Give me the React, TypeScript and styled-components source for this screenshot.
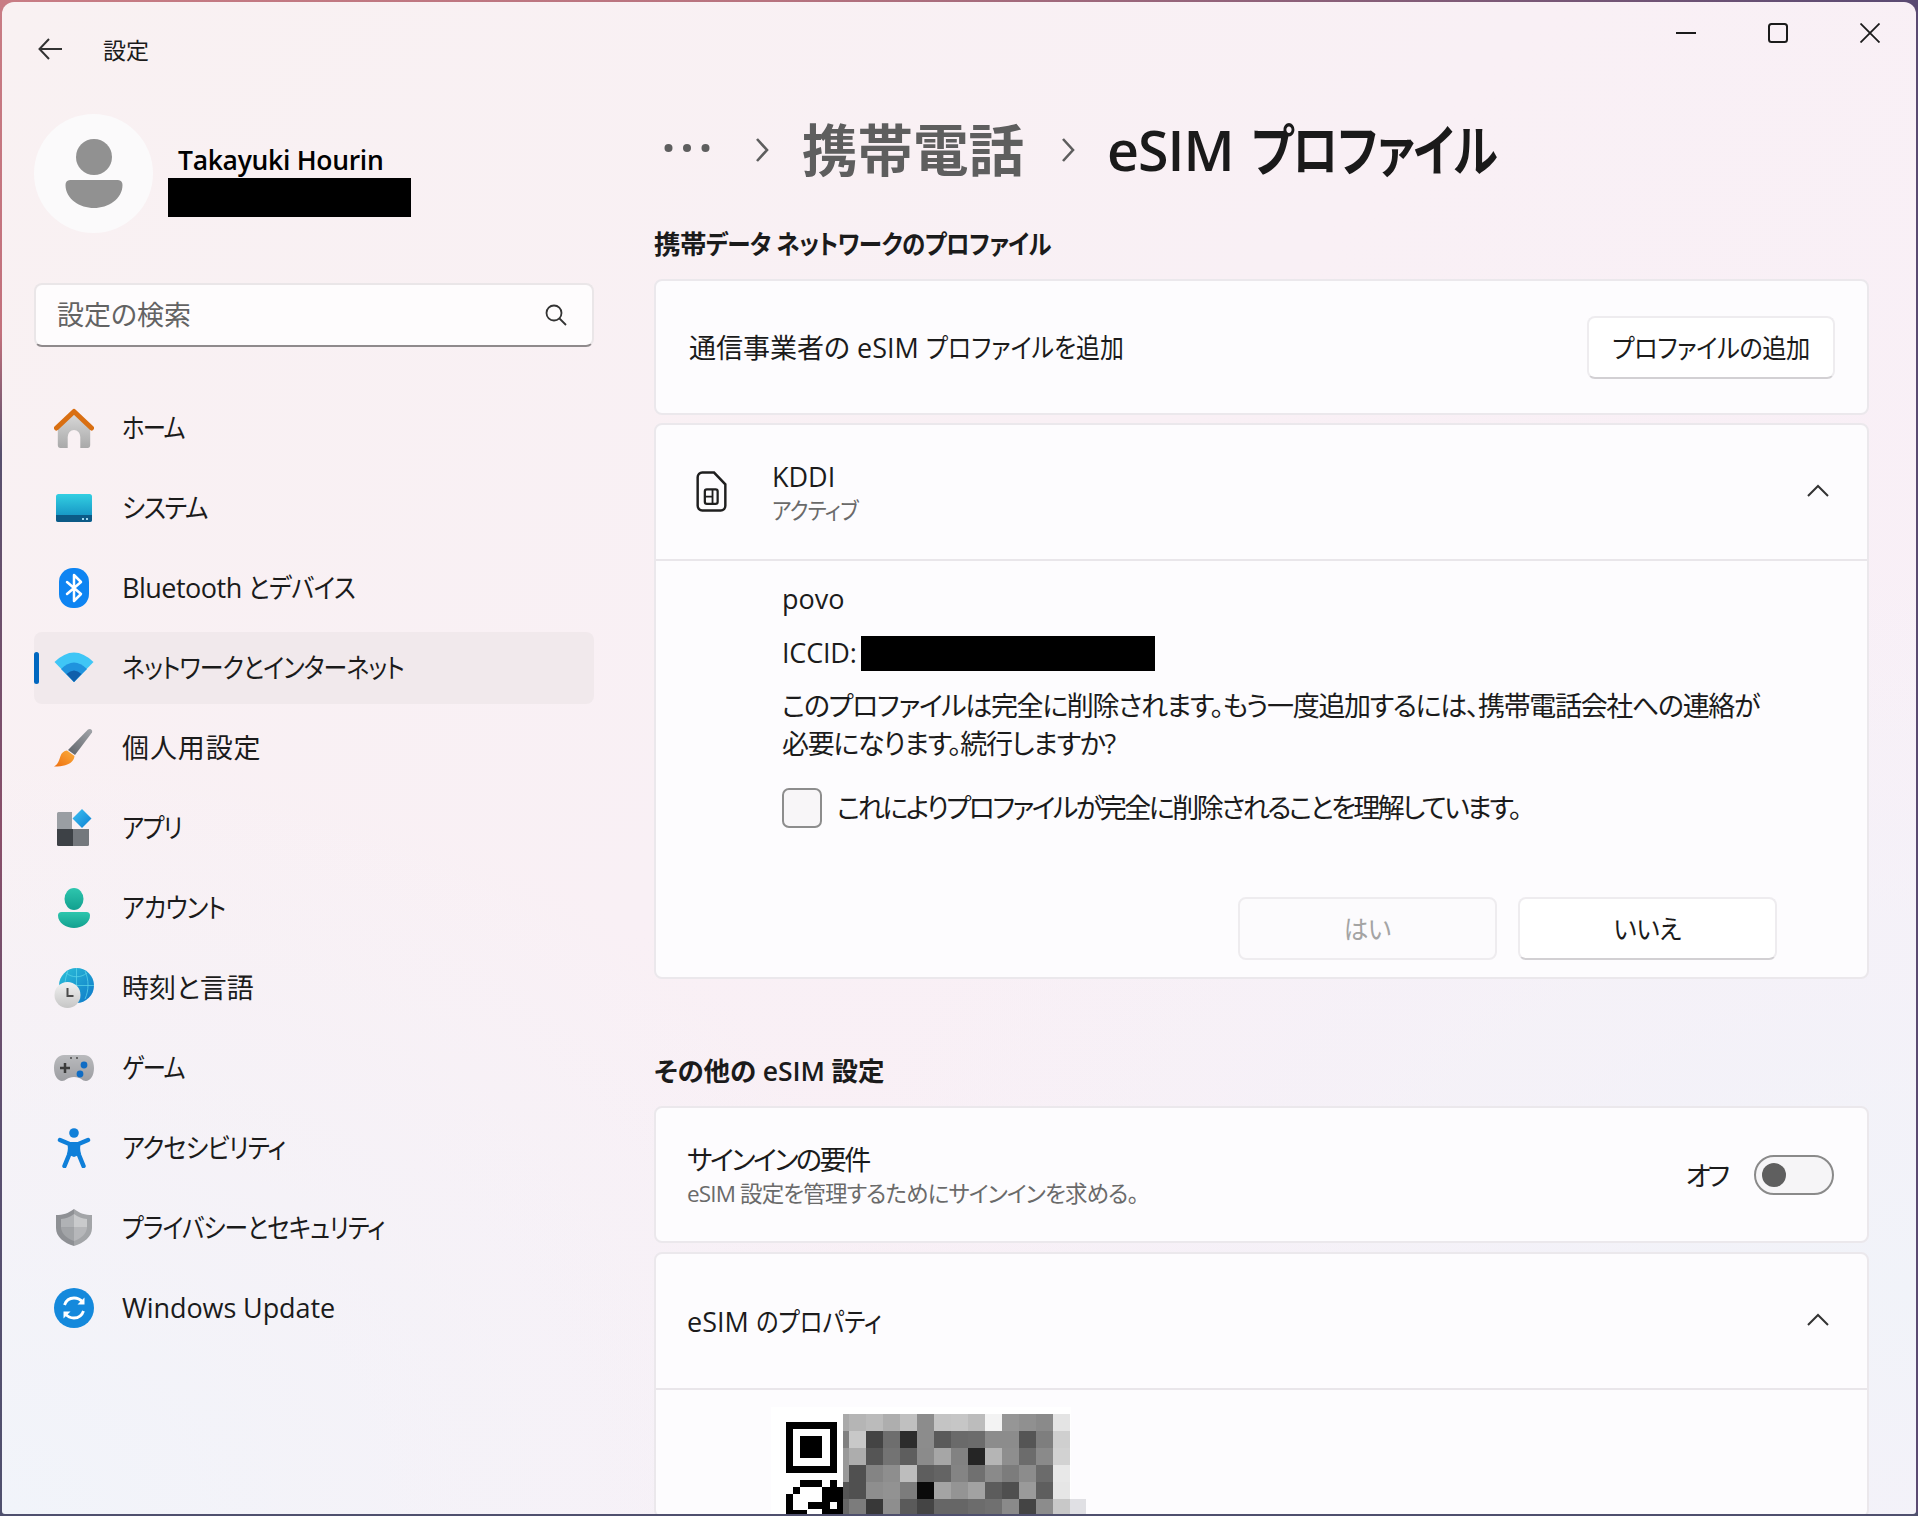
import { FC, ReactNode } from "react";
import styled, { createGlobalStyle } from "styled-components";

const GlobalStyle = createGlobalStyle`
  html, body {
    margin: 0;
    padding: 0;
    background: #5a4f6e;
  }

  body {
    font-family: "Open Sans", "Noto Sans CJK JP", sans-serif;
    font-feature-settings: "palt";
    color: #1b1b1b;
  }
`;

const Desktop = styled.div`
  width: 1918px;
  height: 1516px;
  box-sizing: border-box;
  padding: 2px;
  overflow: hidden;
  background:
    linear-gradient(#4f506e, #4f506e) bottom / 100% 4px no-repeat,
    linear-gradient(180deg, #c87c84 0%, #c2707c 22%, #57506e 30%, #8a4f6a 55%, #5a4f70 75%, #4f506e 100%) left / 4px 100% no-repeat,
    linear-gradient(90deg, #c87c84 0%, #b8737f 40%, #5a4a72 100%);
`;

const Window = styled.div`
  height: 100%;
  display: grid;
  grid-template-columns: 652px 1fr;
  overflow: hidden;
  border-radius: 12px 12px 3px 3px;
  background:
    radial-gradient(ellipse at 100% 85%, #f1f3f9 0, rgba(241, 243, 249, 0) 40%),
    radial-gradient(ellipse at 0% 100%, #f1f4fa 0, rgba(241, 244, 250, 0) 36%),
    linear-gradient(135deg, #f9f1f2 0%, #f9f0f5 45%, #f8eff8 100%);
`;

const Sidebar = styled.aside`
  padding-left: 32px;
`;

const TitleBar = styled.div`
  height: 94px;
  display: flex;
  align-items: center;
  gap: 41px;
  padding-left: 4px;
  margin-bottom: 18px;
`;

const AppTitle = styled.span`
  font-size: 23px;
  line-height: 30px;
  margin-top: 1px;
`;

const Profile = styled.div`
  display: flex;
  gap: 15px;
`;

const Avatar = styled.div`
  width: 119px;
  height: 119px;
  border-radius: 50%;
  background: #fbfafb;
  display: flex;
  align-items: center;
  justify-content: center;
`;

const ProfileText = styled.div`
  padding-top: 31px;
`;

const UserName = styled.div`
  font-size: 26.5px;
  line-height: 30px;
  margin-bottom: 3px;
  font-weight: 600;
  color: #000;
  padding-left: 10px;
  letter-spacing: -0.3px;
`;

const Redacted = styled.div<{ $w: number; $h: number }>`
  width: ${(p) => p.$w}px;
  height: ${(p) => p.$h}px;
  background: #000;
`;

const Search = styled.div`
  width: 560px;
  height: 64px;
  box-sizing: border-box;
  margin-top: 50px;
  margin-bottom: 45px;
  padding: 0 25px 0 21px;
  display: flex;
  align-items: center;
  justify-content: space-between;
  background: #fefcfd;
  border: 2px solid #eae6e8;
  border-bottom-color: #8f8a8c;
  border-radius: 8px;
`;

const Placeholder = styled.span`
  font-size: 27px;
  line-height: 36px;
  color: #636363;
`;

const NavList = styled.nav`
  width: 560px;
  display: flex;
  flex-direction: column;
  gap: 8px;
`;

const NavItem = styled.div<{ $active?: boolean }>`
  position: relative;
  height: 72px;
  display: flex;
  align-items: center;
  gap: 28px;
  padding-left: 20px;
  border-radius: 8px;
  background: ${(p) => (p.$active ? "#f1e9ec" : "transparent")};

  &::before {
    content: "";
    display: ${(p) => (p.$active ? "block" : "none")};
    position: absolute;
    left: 0;
    top: 20px;
    width: 5px;
    height: 32px;
    border-radius: 3px;
    background: #0067c0;
  }
`;

const Narrow = styled.span<{ $scale: number; $origin?: string }>`
  display: inline-block;
  white-space: nowrap;
  transform: scaleX(${(p) => p.$scale});
  transform-origin: ${(p) => p.$origin ?? "left"} center;
`;

const NavLabel = styled.span<{ $track: number }>`
  font-size: 27px;
  line-height: 36px;
  letter-spacing: ${(p) => p.$track}px;
  white-space: nowrap;
`;

const Main = styled.main`
  padding-right: 47px;
  min-width: 0;
`;

const Controls = styled.div`
  height: 108px;
  margin-right: -47px;
  display: flex;
  justify-content: flex-end;
  align-items: flex-start;
`;

const ControlButton = styled.div`
  width: 92px;
  height: 62px;
  display: flex;
  align-items: center;
  justify-content: center;
`;

const Breadcrumb = styled.div`
  height: 80px;
  display: flex;
  align-items: center;
  padding-left: 10px;
`;

const Crumb = styled.span<{ $current?: boolean }>`
  font-size: 55.5px;
  line-height: 76px;
  font-weight: 600;
  white-space: nowrap;
  word-spacing: 4px;
  letter-spacing: ${(p) => (p.$current ? "-1px" : "0")};
  color: ${(p) => (p.$current ? "#1a1a1a" : "#5e5e5e")};
`;

const CrumbChevron = styled.svg<{ $left: number; $right: number }>`
  margin: 0 ${(p) => p.$right}px 0 ${(p) => p.$left}px;
  flex: none;
`;

const SectionTitle = styled.h2<{ $top: number; $bottom: number; $track: number }>`
  height: 34px;
  margin: ${(p) => p.$top}px 0 ${(p) => p.$bottom}px 0;
  font-size: 26.5px;
  line-height: 34px;
  font-weight: 600;
  letter-spacing: ${(p) => p.$track}px;
  white-space: nowrap;
`;

const Card = styled.section<{ $gap?: number }>`
  margin-bottom: ${(p) => p.$gap ?? 9}px;
  box-sizing: border-box;
  overflow: hidden;
  background: #fdfcfe;
  border: 2px solid #ebe8ec;
  border-radius: 8px;
`;

const CardRow = styled.div<{ $h: number; $pl: number; $pr: number; $divided?: boolean }>`
  height: ${(p) => p.$h}px;
  box-sizing: border-box;
  display: flex;
  align-items: center;
  padding: 0 ${(p) => p.$pr}px 0 ${(p) => p.$pl}px;
  border-bottom: ${(p) => (p.$divided ? "2px solid #e9e6ea" : "none")};
`;

const RowLabel = styled.span<{ $track?: number }>`
  flex: 1;
  font-size: 27px;
  line-height: 36px;
  margin-top: 1px;
  letter-spacing: ${(p) => p.$track ?? 0}px;
  white-space: nowrap;
`;

const RowTexts = styled.div<{ $lift: number }>`
  flex: 1;
  display: flex;
  flex-direction: column;
  white-space: nowrap;
  margin-top: ${(p) => p.$lift}px;
`;

const RowTitle = styled.span<{ $track?: number }>`
  font-size: 27px;
  line-height: 36px;
  letter-spacing: ${(p) => p.$track ?? 0}px;
`;

const RowHint = styled.span<{ $track?: number }>`
  font-size: 22.5px;
  line-height: 32px;
  color: #6a6a6a;
  letter-spacing: ${(p) => p.$track ?? 0}px;
`;

const Button = styled.div<{ $w: number; $disabled?: boolean }>`
  width: ${(p) => p.$w}px;
  height: 63px;
  box-sizing: border-box;
  padding-bottom: 2px;
  display: flex;
  align-items: center;
  justify-content: center;
  font-size: 26.5px;
  letter-spacing: -0.5px;
  border-radius: 8px;
  border: 2px solid #eeecef;
  border-bottom-color: ${(p) => (p.$disabled ? "#eeecef" : "#d2d0d3")};
  background: ${(p) => (p.$disabled ? "#fcfbfd" : "#fff")};
  color: ${(p) => (p.$disabled ? "#a4a4a4" : "#1b1b1b")};
`;

const SimIcon = styled.svg`
  margin-right: 45px;
  margin-bottom: 2px;
  flex: none;
`;

const ChevronBox = styled.svg`
  margin-bottom: 4px;
  flex: none;
`;

const ProfileBody = styled.div`
  padding: 18px 90px 17px 126px;
`;

const BodyLine = styled.div`
  font-size: 27px;
  line-height: 40px;
  height: 40px;
`;

const IccidLine = styled(BodyLine)`
  margin-top: 14px;
  display: flex;
  align-items: center;
  gap: 4px;
  letter-spacing: -0.2px;
`;

const Warning = styled.p`
  height: 76px;
  margin: 14px 0 25px;
  font-size: 27px;
  line-height: 38px;
  letter-spacing: -1.35px;
  white-space: nowrap;
`;

const CheckRow = styled.div`
  display: flex;
  align-items: center;
  gap: 15px;
  font-size: 27px;
  letter-spacing: -2.52px;
  white-space: nowrap;
`;

const CheckLabel = styled.span`
  margin-top: -3px;
`;

const CheckBox = styled.div`
  width: 40px;
  height: 40px;
  box-sizing: border-box;
  border: 2px solid #8d8d8d;
  border-radius: 7px;
  background: #f8f6f8;
`;

const ButtonRow = styled.div`
  margin-top: 69px;
  display: flex;
  justify-content: flex-end;
  gap: 21px;
`;

const ToggleLabel = styled.span`
  font-size: 27px;
  letter-spacing: -3px;
  margin-right: 27px;
`;

const Toggle = styled.div`
  width: 80px;
  height: 40px;
  box-sizing: border-box;
  padding-left: 6px;
  display: flex;
  align-items: center;
  border: 2px solid #8a8a8a;
  border-radius: 20px;
  background: #f6f5f7;

  &::after {
    content: "";
    width: 24px;
    height: 24px;
    border-radius: 50%;
    background: #5f5f5f;
  }
`;

const QrBody = styled.div`
  padding: 17px 0 0 115px;
  line-height: 0;
`;

const icon = (children: ReactNode) => (
  <svg width="40" height="40" viewBox="0 0 40 40" style={{ flex: "none" }}>
    {children}
  </svg>
);

const HomeIcon = () =>
  icon(
    <>
      <defs>
        <linearGradient id="homeBody" x1="0" y1="0" x2="0" y2="1">
          <stop offset="0" stopColor="#dcdcdc" />
          <stop offset="1" stopColor="#a9a9a9" />
        </linearGradient>
      </defs>
      <path d="M2 18 20 3 38 18V37a3 3 0 0 1-3 3H27V29a7 7 0 0 0-14 0V40H5a3 3 0 0 1-3-3Z" fill="url(#homeBody)" transform="translate(2 0) scale(.9 1)" />
      <path d="M2.500 20 20 3.500 37.500 20" fill="none" stroke="#d96f12" strokeWidth="5" strokeLinejoin="round" strokeLinecap="round" />
    </>
  );

const SystemIcon = () =>
  icon(
    <>
      <defs>
        <linearGradient id="sysScreen" x1="0" y1="0" x2="0" y2="1">
          <stop offset="0" stopColor="#33cfe2" />
          <stop offset="1" stopColor="#0f87bd" />
        </linearGradient>
      </defs>
      <rect x="2" y="6" width="36" height="28" rx="2.500" fill="url(#sysScreen)" />
      <path d="M2 27H38V31.500A2.500 2.500 0 0 1 35.500 34H4.500A2.500 2.500 0 0 1 2 31.500Z" fill="#0c5a86" />
      <rect x="28" y="30" width="2" height="2" fill="#9fd8ee" />
      <rect x="32" y="30" width="2" height="2" fill="#9fd8ee" />
    </>
  );

const BluetoothIcon = () =>
  icon(
    <>
      <rect x="5" y="0" width="30" height="40" rx="14" fill="#0e84f2" />
      <path d="M13 14 27 26 20 33V7L27 14 13 26" fill="none" stroke="#fff" strokeWidth="2.500" strokeLinejoin="round" strokeLinecap="round" />
    </>
  );

const WifiIcon = () =>
  icon(
    <>
      <path d="M.5 14Q20-5 39.500 14L20 34Z" fill="#3fc6f6" />
      <path d="M7 21Q20 8 33 21L20 34Z" fill="#1f93de" />
      <path d="M12.500 26Q20 19 27.500 26L20 34Z" fill="#0f5fab" />
    </>
  );

const BrushIcon = () =>
  icon(
    <>
      <defs>
        <linearGradient id="brushHandle" x1="0" y1="1" x2="1" y2="0">
          <stop offset="0" stopColor="#5d6268" />
          <stop offset="1" stopColor="#a3a6aa" />
        </linearGradient>
        <linearGradient id="brushTip" x1="0" y1="1" x2="1" y2="0">
          <stop offset="0" stopColor="#ee6f10" />
          <stop offset="1" stopColor="#fbae3c" />
        </linearGradient>
      </defs>
      <path d="M34 1.500C36 0 39 1.500 38 4.500L21 27 14 22Z" fill="url(#brushHandle)" />
      <path d="M13 22.500 20.500 28C20 33 16 38.500 0 38.500 4.500 36 5 32 6.500 28 7.500 24.500 10 23 13 22.500Z" fill="url(#brushTip)" />
    </>
  );

const AppsIcon = () =>
  icon(
    <>
      <defs>
        <linearGradient id="appsBlue" x1="0" y1="0" x2="1" y2="1">
          <stop offset="0" stopColor="#3fc3f3" />
          <stop offset="1" stopColor="#0c7fd2" />
        </linearGradient>
      </defs>
      <path d="M3 5.500A1.500 1.500 0 0 1 4.500 4H18V21H3Z" fill="#9a9ea3" />
      <path d="M3 21H19V38H4.500A1.500 1.500 0 0 1 3 36.500Z" fill="#3d4146" />
      <path d="M19 21H35V36.500A1.500 1.500 0 0 1 33.500 38H19Z" fill="#74787d" />
      <path d="M28 1 37.500 10.500 28 20 18.500 10.500Z" fill="url(#appsBlue)" strokeLinejoin="round" />
    </>
  );

const AccountIcon = () =>
  icon(
    <>
      <defs>
        <linearGradient id="acct" x1="0" y1="0" x2="0" y2="1">
          <stop offset="0" stopColor="#2ec6ae" />
          <stop offset="1" stopColor="#12a08f" />
        </linearGradient>
      </defs>
      <ellipse cx="20" cy="11" rx="9.500" ry="11" fill="url(#acct)" />
      <path d="M7.500 24H32.500A3.500 3.500 0 0 1 36 27.500C36 35 28 40 20 40S4 35 4 27.500A3.500 3.500 0 0 1 7.500 24Z" fill="url(#acct)" />
    </>
  );

const TimeIcon = () =>
  icon(
    <>
      <defs>
        <linearGradient id="globe" x1="0" y1="0" x2="1" y2="1">
          <stop offset="0" stopColor="#2cc0d8" />
          <stop offset="1" stopColor="#0d77c9" />
        </linearGradient>
        <linearGradient id="clockFace" x1="0" y1="0" x2="0" y2="1">
          <stop offset="0" stopColor="#f2f2f2" />
          <stop offset="1" stopColor="#c6c6c6" />
        </linearGradient>
      </defs>
      <circle cx="22.500" cy="17.500" r="17.500" fill="url(#globe)" />
      <path d="M5 17.500H40M22.500 0V35M12 5C18 10 27 10 33 5M14 3C10 12 10 22 14 31M31 3C35 12 35 22 31 31" fill="none" stroke="#60d7ea" strokeWidth="1" opacity=".7" />
      <circle cx="13.500" cy="27" r="13" fill="url(#clockFace)" />
      <path d="M13.500 20V28H19.500" fill="none" stroke="#4b4b4b" strokeWidth="2" />
    </>
  );

const GameIcon = () =>
  icon(
    <>
      <defs>
        <linearGradient id="pad" x1="0" y1="0" x2="0" y2="1">
          <stop offset="0" stopColor="#b9babd" />
          <stop offset="1" stopColor="#9d9ea2" />
        </linearGradient>
      </defs>
      <path d="M10 7H30C36 7 40 12 40 20 40 28 36 33 32 33 28 33 27 29 20 29 13 29 12 33 8 33 4 33 0 28 0 20 0 12 4 7 10 7Z" fill="url(#pad)" />
      <path d="M11 15V25M6 20H16" stroke="#3c3c3c" strokeWidth="2.500" />
      <circle cx="30" cy="17" r="3.400" fill="#0f6cc4" />
      <circle cx="26" cy="26" r="3.400" fill="#0f6cc4" />
      <path d="M16 10H18M22 10H24" stroke="#4a4a4a" strokeWidth="1.500" />
    </>
  );

const AccessIcon = () =>
  icon(
    <>
      <circle cx="20" cy="5" r="4.800" fill="#0f7fd9" />
      <path d="M6 12 15.500 16C16.500 19 16.500 22 15 27L10.500 38M34 12 24.500 16C23.500 19 23.500 22 25 27L29.500 38" fill="none" stroke="#0f7fd9" strokeWidth="4.500" strokeLinecap="round" strokeLinejoin="round" />
      <path d="M15.500 14H24.500L25 27 20 29 15 27Z" fill="#0f7fd9" />
    </>
  );

const ShieldIcon = () =>
  icon(
    <>
      <path d="M20 1C26 5.500 31 7 38 7V20C38 29 30 35 20 38Z" fill="#a3a5a8" />
      <path d="M20 1C14 5.500 9 7 2 7V20C2 29 10 35 20 38Z" fill="#8e9094" />
      <path d="M20 6C24 9 28 10.500 33 11V19.500H20Z" fill="#c9cacc" />
      <path d="M20 6C16 9 12 10.500 7 11V19.500H20Z" fill="#b0b2b5" />
      <path d="M20 19.500H33C32.500 26 27 30.500 20 33Z" fill="#b6b7ba" />
      <path d="M20 19.500H7C7.500 26 13 30.500 20 33Z" fill="#a2a4a7" />
    </>
  );

const UpdateIcon = () =>
  icon(
    <>
      <circle cx="20" cy="20" r="20" fill="#1489dc" />
      <path d="M10.500 17C12 12.500 16 10 20 10 24 10 26.500 11.500 28.500 14" fill="none" stroke="#fff" strokeWidth="2.800" />
      <path d="M30.500 9.500V16.500H23.500Z" fill="#fff" />
      <path d="M29.500 23C28 27.500 24 30 20 30 16 30 13.500 28.500 11.500 26" fill="none" stroke="#fff" strokeWidth="2.800" />
      <path d="M9.500 30.500V23.500H16.500Z" fill="#fff" />
    </>
  );

const navItems: { key: string; label: ReactNode; track: number; Icon: FC; active?: boolean }[] = [
  { key: "home", label: <Narrow $scale={0.864}>ホーム</Narrow>, track: -2, Icon: HomeIcon },
  { key: "system", label: <Narrow $scale={0.92}>システム</Narrow>, track: -1.5, Icon: SystemIcon },
  {
    key: "bt",
    label: (
      <>
        Bluetooth <Narrow $scale={0.9}>とデバイス</Narrow>
      </>
    ),
    track: -0.5,
    Icon: BluetoothIcon,
  },
  {
    key: "net",
    label: <Narrow $scale={0.885}>ネットワークとインターネット</Narrow>,
    track: -1,
    Icon: WifiIcon,
    active: true,
  },
  { key: "personal", label: "個人用設定", track: 0.9, Icon: BrushIcon },
  { key: "apps", label: <Narrow $scale={0.877}>アプリ</Narrow>, track: -1.5, Icon: AppsIcon },
  { key: "account", label: <Narrow $scale={0.903}>アカウント</Narrow>, track: -1, Icon: AccountIcon },
  { key: "time", label: "時刻と言語", track: 0, Icon: TimeIcon },
  { key: "game", label: <Narrow $scale={0.864}>ゲーム</Narrow>, track: -2, Icon: GameIcon },
  { key: "a11y", label: <Narrow $scale={0.9}>アクセシビリティ</Narrow>, track: -1, Icon: AccessIcon },
  { key: "privacy", label: <Narrow $scale={0.878}>プライバシーとセキュリティ</Narrow>, track: -1, Icon: ShieldIcon },
  { key: "update", label: "Windows Update", track: -0.1, Icon: UpdateIcon },
];

const Chevron = ({ left, right }: { left: number; right: number }) => (
  <CrumbChevron $left={left} $right={right} width="14" height="26" viewBox="0 0 14 26">
    <path d="M2 2 12 13 2 24" fill="none" stroke="#5e5e5e" strokeWidth="2.600" />
  </CrumbChevron>
);

const ChevronUp = () => (
  <ChevronBox width="22" height="13" viewBox="0 0 22 13">
    <path d="M1 12 11 2 21 12" fill="none" stroke="#333" strokeWidth="2" />
  </ChevronBox>
);

const qrRows = [
  "aa b5 bb ae c0 8c c4 c6 bc f3 96 90 8a e4",
  "80 c8 44 6e 2c 8c 5a 6a 6c 8c 8c 55 7e cf",
  "99 ad 55 73 5e 8b a6 82 25 b5 8e 6c 8a d2",
  "99 50 84 8e bd 5e 64 84 70 8a 7c 8c 6b e8",
  "55 50 8e 92 7c 0a a4 94 a2 5c 4f 9a 5e e6",
  "66 7c 38 8e 5a 44 66 66 6c 70 8a 44 8c c8",
].map((row) => row.split(" "));

const QrCode = () => (
  <svg width="318" height="109" viewBox="0 0 318 109" shapeRendering="crispEdges">
    <rect width="300" height="109" fill="#fff" />
    <rect x="15" y="15" width="51" height="51" fill="#000" />
    <rect x="22" y="22" width="37" height="37" fill="#fff" />
    <rect x="29" y="29" width="22" height="22" fill="#000" />
    <rect x="29" y="73" width="22" height="7" fill="#000" />
    <rect x="59" y="73" width="7" height="7" fill="#000" />
    <rect x="22" y="80" width="7" height="7" fill="#000" />
    <rect x="15" y="87" width="7" height="16" fill="#000" />
    <rect x="15" y="103" width="21" height="6" fill="#000" />
    <rect x="51" y="80" width="21" height="29" fill="#000" />
    <rect x="59" y="95" width="7" height="7" fill="#fff" />
    <rect x="37" y="95" width="14" height="7" fill="#000" />
    {qrRows.map((row, r) =>
      row.map((grey, c) => (
        <rect
          key={`${r}-${c}`}
          x={c === 0 ? 72 : 78 + (c - 1) * 17}
          y={7 + r * 17}
          width={c === 0 ? 6 : 17}
          height={17}
          fill={`#${grey}${grey}${grey}`}
        />
      ))
    )}
    <rect x="299" y="92" width="16" height="17" fill="#e0e0e4" />
  </svg>
);

export default function App() {
  return (
    <>
      <GlobalStyle />
      <Desktop>
        <Window>
          <Sidebar>
            <TitleBar>
              <svg width="24" height="22" viewBox="0 0 24 22">
                <path d="M24 11H2M11 1 1.500 11 11 21" fill="none" stroke="#333" strokeWidth="2" />
              </svg>
              <AppTitle>設定</AppTitle>
            </TitleBar>
            <Profile>
              <Avatar>
                <svg width="58" height="70" viewBox="0 0 58 70">
                  <ellipse cx="29" cy="18" rx="18" ry="18" fill="#919191" />
                  <path d="M5 41H53A5 5 0 0 1 57.500 46C57.500 60 43 69 29 69S.5 60 .5 46A5 5 0 0 1 5 41Z" fill="#919191" />
                </svg>
              </Avatar>
              <ProfileText>
                <UserName>Takayuki Hourin</UserName>
                <Redacted $w={243} $h={39} />
              </ProfileText>
            </Profile>
            <Search>
              <Placeholder>設定の検索</Placeholder>
              <svg width="22" height="22" viewBox="0 0 22 22">
                <circle cx="9" cy="9" r="7.500" fill="none" stroke="#333" strokeWidth="1.800" />
                <path d="M14.500 14.500 21 21" stroke="#333" strokeWidth="1.800" />
              </svg>
            </Search>
            <NavList>
              {navItems.map(({ key, label, track, Icon, active }) => (
                <NavItem key={key} $active={active}>
                  <Icon />
                  <NavLabel $track={track}>{label}</NavLabel>
                </NavItem>
              ))}
            </NavList>
          </Sidebar>

          <Main>
            <Controls>
              <ControlButton>
                <svg width="20" height="2" viewBox="0 0 20 2">
                  <rect width="20" height="2" fill="#1b1b1b" />
                </svg>
              </ControlButton>
              <ControlButton>
                <svg width="20" height="20" viewBox="0 0 20 20">
                  <rect x="1" y="1" width="18" height="18" rx="2.500" fill="none" stroke="#1b1b1b" strokeWidth="2" />
                </svg>
              </ControlButton>
              <ControlButton>
                <svg width="20" height="20" viewBox="0 0 20 20">
                  <path d="M.5.5 19.500 19.500M19.500.5.5 19.500" stroke="#1b1b1b" strokeWidth="1.800" />
                </svg>
              </ControlButton>
            </Controls>

            <Breadcrumb>
              <svg width="46" height="10" viewBox="0 0 46 10" style={{ marginRight: 45, marginBottom: 4, flex: "none" }}>
                <circle cx="4.500" cy="5" r="4" fill="#5e5e5e" />
                <circle cx="23" cy="5" r="4" fill="#5e5e5e" />
                <circle cx="41.500" cy="5" r="4" fill="#5e5e5e" />
              </svg>
              <Chevron left={0} right={33} />
              <Crumb>携帯電話</Crumb>
              <Chevron left={37} right={32} />
              <Crumb $current>
                eSIM <Narrow $scale={0.82}>プロファイル</Narrow>
              </Crumb>
            </Breadcrumb>

            <SectionTitle $top={37} $bottom={18} $track={-0.6}>
              携帯<Narrow $scale={0.888}>データ ネットワークのプロファイル</Narrow>
            </SectionTitle>

            <Card $gap={8}>
              <CardRow $h={132} $pl={33} $pr={32}>
                <RowLabel>
                  通信事業者の eSIM <Narrow $scale={0.885}>プロファイルを追加</Narrow>
                </RowLabel>
                <Button $w={248}>
                  <Narrow $scale={0.915} $origin="center">プロファイルの追加</Narrow>
                </Button>
              </CardRow>
            </Card>

            <Card $gap={0}>
              <CardRow $h={136} $pl={40} $pr={38} $divided>
                <SimIcon width="31" height="41" viewBox="0 0 30 40">
                  <path d="M6 1.500H17.500L28.500 13V34A4.500 4.500 0 0 1 24 38.500H6A4.500 4.500 0 0 1 1.500 34V6A4.500 4.500 0 0 1 6 1.500Z" fill="none" stroke="#1f1f1f" strokeWidth="2.400" />
                  <rect x="8.500" y="18" width="12.500" height="14" rx="2" fill="none" stroke="#1f1f1f" strokeWidth="2.200" />
                  <path d="M8.500 25H16M16 18V32" stroke="#1f1f1f" strokeWidth="1.800" fill="none" />
                </SimIcon>
                <RowTexts $lift={1}>
                  <RowTitle>KDDI</RowTitle>
                  <RowHint $track={-0.8}>
                    <Narrow $scale={0.93}>アクティブ</Narrow>
                  </RowHint>
                </RowTexts>
                <ChevronUp />
              </CardRow>
              <ProfileBody>
                <BodyLine>povo</BodyLine>
                <IccidLine>
                  ICCID:
                  <Redacted $w={294} $h={35} />
                </IccidLine>
                <Warning>
                  このプロファイルは完全に削除されます。もう一度追加するには、携帯電話会社への連絡が
                  <br />
                  必要になります。続行しますか?
                </Warning>
                <CheckRow>
                  <CheckBox />
                  <CheckLabel>これによりプロファイルが完全に削除されることを理解しています。</CheckLabel>
                </CheckRow>
                <ButtonRow>
                  <Button $w={259} $disabled>
                    <Narrow $scale={0.93} $origin="center">はい</Narrow>
                  </Button>
                  <Button $w={259}>
                    <Narrow $scale={0.93} $origin="center">いいえ</Narrow>
                  </Button>
                </ButtonRow>
              </ProfileBody>
            </Card>

            <SectionTitle $top={75} $bottom={18} $track={-0.1}>その他の eSIM 設定</SectionTitle>

            <Card>
              <CardRow $h={133} $pl={31} $pr={33}>
                <RowTexts $lift={3}>
                  <RowTitle $track={-2.4}>サインインの要件</RowTitle>
                  <RowHint $track={-0.85}>eSIM 設定を管理するためにサインインを求める。</RowHint>
                </RowTexts>
                <ToggleLabel>オフ</ToggleLabel>
                <Toggle />
              </CardRow>
            </Card>

            <Card>
              <CardRow $h={136} $pl={31} $pr={38} $divided>
                <RowLabel>
                  eSIM <Narrow $scale={0.86}>のプロパティ</Narrow>
                </RowLabel>
                <ChevronUp />
              </CardRow>
              <QrBody>
                <QrCode />
              </QrBody>
            </Card>
          </Main>
        </Window>
      </Desktop>
    </>
  );
}
